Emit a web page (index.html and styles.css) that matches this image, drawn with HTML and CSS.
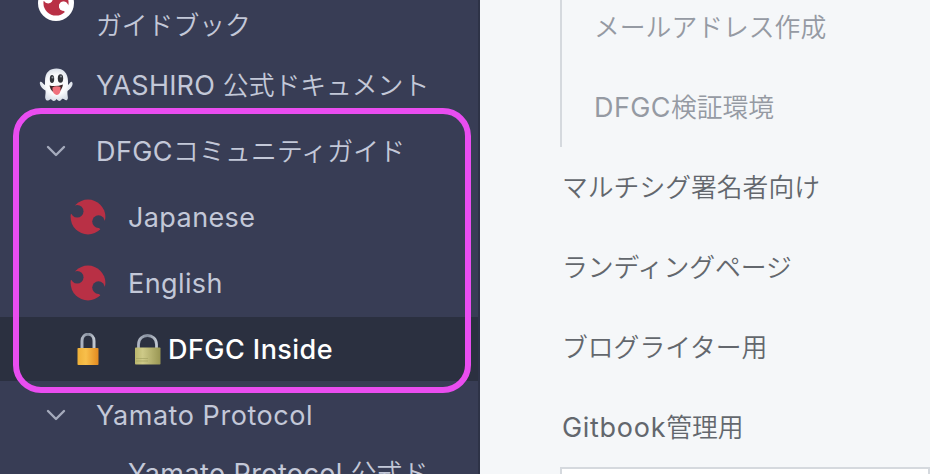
FILE: index.html
```html
<!DOCTYPE html>
<html lang="ja">
<head>
<meta charset="utf-8">
<title>DFGC Inside</title>
<link rel="stylesheet" href="styles.css">
</head>
<body>
<svg class="defs" width="0" height="0" aria-hidden="true">
  <defs>
    <mask id="bites">
      <rect width="36" height="36" fill="#fff"/>
      <circle cx="7.2" cy="12.3" r="6.3" fill="#000"/>
      <path d="M-2 2L5 6.200L7 13L0 15.500Z" fill="#000"/>
      <circle cx="28.5" cy="22.6" r="6.3" fill="#000"/>
      <path d="M36 20L38 33L31 31L28 28Z" fill="#000"/>
    </mask>
    <symbol id="mark" viewBox="0 0 36 36">
      <circle cx="18" cy="18" r="17.4" fill="#b93045" mask="url(#bites)"/>
    </symbol>
    <linearGradient id="gold"><stop offset="0" stop-color="#eeb039"/><stop offset=".4" stop-color="#f8bf4b"/><stop offset="1" stop-color="#e38a20"/></linearGradient>
    <linearGradient id="brass"><stop offset="0" stop-color="#b9b66d"/><stop offset=".3" stop-color="#ceca88"/><stop offset="1" stop-color="#999653"/></linearGradient>
    <linearGradient id="steel"><stop offset="0" stop-color="#aeb5c2"/><stop offset=".5" stop-color="#858e9d"/><stop offset="1" stop-color="#c1c7d1"/></linearGradient>
    <radialGradient id="ghost"><stop offset=".6" stop-color="#fafbfd"/><stop offset="1" stop-color="#d9dfe8"/></radialGradient>
  </defs>
</svg>
<div class="app">
  <nav class="sidebar">
    <a class="item tall"><span class="icon"><svg width="36" height="36" viewBox="0 0 36 36"><circle cx="18" cy="18" r="18" fill="#fff"/><use href="#mark" x="5" y="5" width="26" height="26"/><circle cx="10" cy="14" r="4" fill="#fff"/><circle cx="25.5" cy="21" r="4.5" fill="#fff"/></svg></span><span class="label guide">ガイドブック</span></a>
    <a class="item"><span class="icon"><svg width="36" height="36" viewBox="0 0 36 36"><path d="M7 14C7 5 12 1.500 18.500 1.500S30 6 30 14L30 18C32 17 32 14 34 15C36 17 33 22 29.500 24C29 29 31 31 29 33C27 34 26 31 24 32C22 35 20 34 18.500 32C17 35 14 34 13 32C11 33 9 35 7.500 32C6.500 30 8 27 7.500 23.500C4 22 1 17 2 15C4 13.500 5 17 7 18Z" fill="url(#ghost)"/><ellipse cx="14" cy="12" rx="2.200" ry="4" fill="#30333a"/><ellipse cx="22.500" cy="11.500" rx="2.700" ry="4.200" fill="#30333a"/><circle cx="14.500" cy="10.500" r="1" fill="#8d939b"/><circle cx="23" cy="9.500" r="1" fill="#8d939b"/><path d="M11.500 18.500Q18 20 25 17.500Q24 24 19 26Q13 26 11.500 18.500Z" fill="#3b2528"/><path d="M14.500 20.500Q18 18.500 22.500 20V24Q21.500 28 18.500 28Q15 27 14.500 23Z" fill="#f0717d"/></svg></span><span class="label"><span class="en yashiro">YASHIRO </span>公式ドキュメント</span></a>
    <div class="group">
      <a class="item"><span class="icon"><svg width="20" height="12" viewBox="0 0 20 12"><path class="chevron" d="M2 2L10 10L18 2"/></svg></span><span class="label community"><span class="en">DFGC</span>コミュニティガイド</span></a>
      <a class="item child"><span class="icon"><svg width="36" height="36"><use href="#mark"/></svg></span><span class="label en">Japanese</span></a>
      <a class="item child"><span class="icon"><svg width="36" height="36"><use href="#mark"/></svg></span><span class="label en">English</span></a>
      <a class="item child active"><span class="icon"><svg width="22" height="32" viewBox="0 0 22 32"><path d="M5 17V8C5 -1 17 -1 17 8V17" fill="none" stroke="url(#steel)" stroke-width="3"/><rect x=".5" y="15" width="21" height="17" rx=".8" fill="url(#gold)"/></svg></span><span class="label en inside"><svg class="lock" width="27" height="31" viewBox="0 0 27 31"><path d="M4.500 15V10.500C4.500 -1.500 22.500 -1.500 22.500 10.500V15" fill="none" stroke="url(#steel)" stroke-width="2.800"/><rect x="1" y="13.500" width="25.500" height="17" rx=".8" fill="url(#brass)"/><path d="M2 24.500H14M2 27H14" stroke="#a5a363" stroke-width=".7"/></svg>DFGC Inside</span></a>
      <div class="callout"></div>
    </div>
    <a class="item"><span class="icon"><svg width="20" height="12" viewBox="0 0 20 12"><path class="chevron" d="M2 2L10 10L18 2"/></svg></span><span class="label en yamato">Yamato Protocol</span></a>
    <a class="item child last"><span class="icon"></span><span class="label"><span class="en">Yamato Protocol </span>公式ド</span></a>
  </nav>
  <main class="pages">
    <div class="nested">
      <a class="page"><span>メールアドレス作成</span></a>
      <a class="page"><span><span class="en">DFGC</span>検証環境</span></a>
    </div>
    <a class="page"><span>マルチシグ署名者向け</span></a>
    <a class="page"><span>ランディングページ</span></a>
    <a class="page"><span>ブログライター用</span></a>
    <a class="page"><span><span class="en gitbook">Gitbook</span>管理用</span></a>
    <div class="card"></div>
  </main>
</div>
</body>
</html>
```
FILE: styles.css
```css
* { box-sizing: border-box; }
body {
  margin: 0;
  overflow: hidden;
  background: #f5f7f9;
  font: 350 25.8px/40px Inter, "Noto Sans CJK JP", sans-serif;
}
.en { font-size: 27px; font-weight: 400; letter-spacing: .4px; white-space: pre; }
.yashiro { letter-spacing: .2px; }
.yamato { letter-spacing: .55px; }
.gitbook { letter-spacing: .7px; }
.community { letter-spacing: .2px; }
.defs { position: absolute; }
.app { display: flex; height: 474px; overflow: hidden; }
.sidebar {
  flex: 0 0 480px;
  height: 474px;
  overflow: hidden;
  background: #383d55;
  border-right: 2px solid #2e3347;
  color: #c3c8d8;
}
.item {
  display: flex;
  align-items: center;
  height: 64px;
  margin-bottom: 2px;
  padding-left: 36px;
  white-space: nowrap;
}
.tall { height: 51px; align-items: flex-start; }
.tall .icon { margin-top: -15px; }
.tall .label { margin-top: 5px; }
.icon {
  display: flex;
  flex: 0 0 40px;
  justify-content: center;
  margin-right: 20px;
}
.label { display: block; padding-top: 1px; }
.child { padding-left: 68px; }
.active { background: #2b3040; color: #fff; }
.inside { display: flex; align-items: center; font-weight: 500; letter-spacing: .45px; }
.lock { margin: 0 7px 0 6px; }
.last { height: 49px; }
.chevron {
  fill: none;
  stroke: #a5abbc;
  stroke-width: 2.4;
  stroke-linecap: round;
  stroke-linejoin: round;
}
.group { position: relative; }
.callout {
  position: absolute;
  inset: -11px 7px -12px 13px;
  border: 6px solid #e94df0;
  border-radius: 28px;
}
.pages { flex: 1; padding-left: 80px; color: #63676d; }
.page {
  display: flex;
  align-items: center;
  height: 80px;
  padding: 2px 0 0 2px;
  white-space: nowrap;
}
.nested {
  height: 147px;
  border-left: 2px solid #d5d9de;
  color: #959aa3;
}
.nested .page { padding-left: 32px; }
.nested .page:first-child { height: 67px; padding-bottom: 13px; }
.card { height: 40px; border: 2px solid #d5d9de; background: #fff; }
```
